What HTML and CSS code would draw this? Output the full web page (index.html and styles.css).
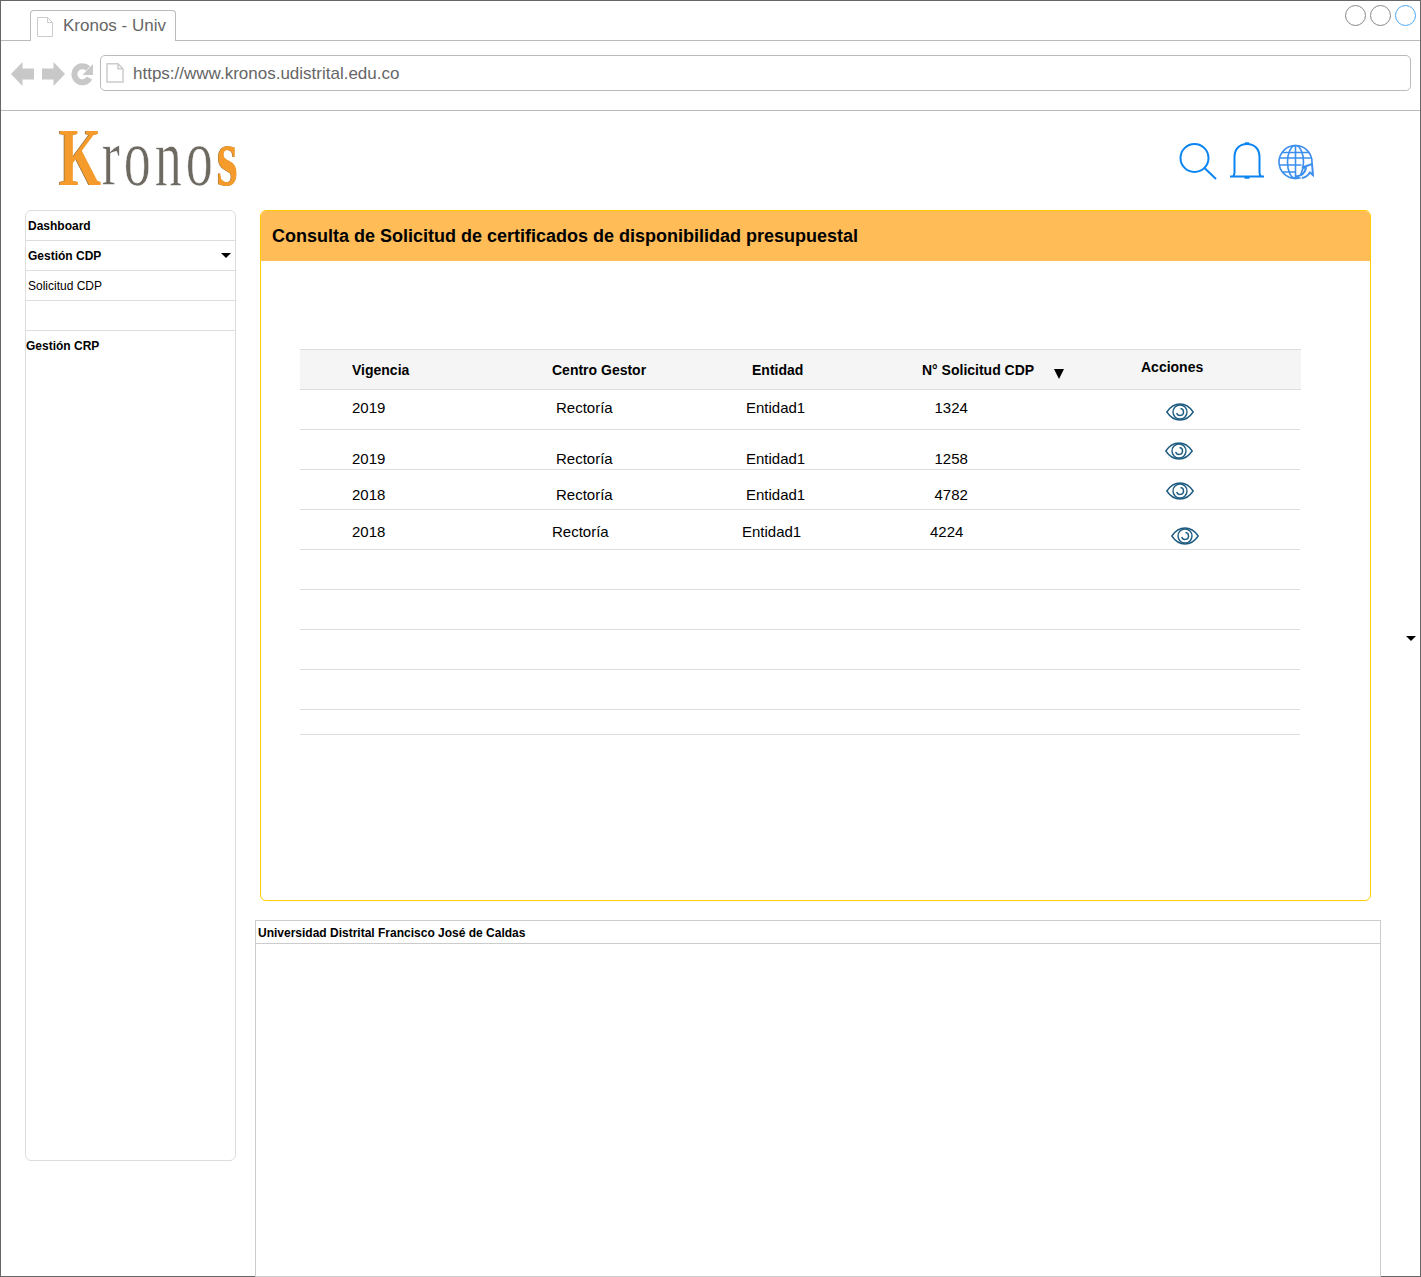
FILE: index.html
```html
<!DOCTYPE html>
<html lang="es">
<head>
  <meta charset="UTF-8" />
  <meta name="viewport" content="width=device-width, initial-scale=1.0"/>
  <title>Kronos - Univ</title>
  <link rel="stylesheet" href="styles.css">
</head>
<body>
<div class="window">

  <!-- browser chrome -->
  <div class="tabbar">
    <div class="tab">
      <svg class="doc" width="18" height="20" viewBox="0 0 18 20"><path d="M1.500.5h10l5 5v14h-15zM11.500.5v5h5" fill="#fff" stroke="#ccc"/></svg>
      <span>Kronos - Univ</span>
    </div>
    <div class="controls">
      <span class="dot"></span>
      <span class="dot"></span>
      <span class="dot dot-blue"></span>
    </div>
  </div>

  <div class="navbar">
    <div class="nav-icons">
      <svg width="24" height="26" viewBox="0 0 24 26"><path d="M0 13 11.500 1v6.500H23v11H11.500V25z" fill="#c8c8c8"/></svg>
      <svg width="24" height="26" viewBox="0 0 24 26"><path d="M24 13 12.500 1v6.500H1v11h11.500V25z" fill="#c8c8c8"/></svg>
      <svg width="23" height="25" viewBox="0 0 23 25"><path d="M17 7.500A8 8 0 1 0 18.500 17" fill="none" stroke="#c8c8c8" stroke-width="6"/><path d="M22 3v11H11.500z" fill="#c8c8c8"/></svg>
    </div>
    <div class="address">
      <svg width="18" height="20" viewBox="0 0 18 20"><path d="M1 .8h11l5 5V19H1zM12 .8v5h5" fill="#fff" stroke="#ccc" stroke-width="1.500"/></svg>
      <span>https://www.kronos.udistrital.edu.co</span>
    </div>
  </div>

  <!-- app header -->
  <header class="apphead">
    <div class="logo"><span class="logo-strong">K</span><span class="logo-thin">rono</span><span class="logo-strong">s</span></div>
    <div class="tools">
      <svg width="38" height="37" viewBox="0 0 38 37" fill="none" stroke="#0a84f0" stroke-width="2"><circle cx="15.500" cy="15" r="14"/><path d="M25.500 25 37 36"/></svg>
      <svg width="36" height="38" viewBox="0 0 36 38" fill="none" stroke="#0a84f0" stroke-width="2"><path d="M1 34.500h34M4 34.500c1-1 1.500-2 1.500-4V15C5.500 7 10.500 2 18 2s12.500 5 12.500 13v15.500c0 2 .5 3 1.500 4"/><path d="M16 1.500h4M15.500 35.500h5" stroke-width="2.500"/></svg>
      <svg width="36" height="36" viewBox="0 0 36 36" fill="none" stroke="#3d8fee" stroke-width="1.600"><circle cx="17.500" cy="18" r="16.500"/><ellipse cx="17.500" cy="18" rx="8" ry="16.500"/><path d="M17.500 1.500v33M4 8.500h27M1.500 14h32M1.500 21h22M4 28h14"/><path d="M17 32c6 1 10-3 11-8l-4-.5 10-3.500 1 11-3-2.500c-2 3-5 5-8 5.500" fill="#fff" stroke-width="2"/></svg>
    </div>
  </header>

  <div class="layout">

    <nav class="sidebar">
      <div class="side-item bold">Dashboard</div>
      <div class="side-item bold">Gestión CDP<span class="caret"></span></div>
      <div class="side-item">Solicitud CDP</div>
      <div class="side-item"></div>
      <div class="side-item bold flush">Gestión CRP</div>
    </nav>

    <main class="main">
      <section class="panel">
        <h1 class="panel-title">Consulta de Solicitud de certificados de disponibilidad presupuestal</h1>
        <div class="grid-table">

          <div class="row row-head">
            <div>Vigencia</div>
            <div>Centro Gestor</div>
            <div>Entidad</div>
            <div class="sort-cell">N° Solicitud CDP<span class="sort-arrow"></span></div>
            <div class="head-actions">Acciones</div>
          </div>

          <div class="row row-a">
            <div>2019</div><div>Rectoría</div><div>Entidad1</div><div>1324</div>
            <div class="eye-cell"><svg class="eye" viewBox="0 0 28 18"><use href="#eye"/></svg></div>
          </div>
          <div class="row row-b">
            <div>2019</div><div>Rectoría</div><div>Entidad1</div><div>1258</div>
            <div class="eye-cell"><svg class="eye" viewBox="0 0 28 18"><use href="#eye"/></svg></div>
          </div>
          <div class="row row-c">
            <div>2018</div><div>Rectoría</div><div>Entidad1</div><div>4782</div>
            <div class="eye-cell"><svg class="eye" viewBox="0 0 28 18"><use href="#eye"/></svg></div>
          </div>
          <div class="row row-d">
            <div>2018</div><div>Rectoría</div><div>Entidad1</div><div>4224</div>
            <div class="eye-cell"><svg class="eye" viewBox="0 0 28 18"><use href="#eye"/></svg></div>
          </div>

          <div class="row"></div>
          <div class="row"></div>
          <div class="row"></div>
          <div class="row"></div>
          <div class="row row-short"></div>
        </div>
      </section>

      <footer class="foot">
        <div class="foot-title">Universidad Distrital Francisco José de Caldas</div>
      </footer>
    </main>
  </div>

  <span class="edge-caret"></span>
</div>

<svg width="0" height="0" class="defs">
  <symbol id="eye" viewBox="0 0 28 18">
    <g fill="none" stroke="#1f5c82" stroke-width="1.400">
      <path d="M.8 9C4.500 3.500 9 1 14 1s9.500 2.500 13.200 8C23.500 14.500 19 17 14 17S4.500 14.500.8 9z"/>
      <circle cx="14" cy="9" r="7"/>
      <path d="M14.500 5.500a3.500 3.500 0 1 1-3.800 4.500"/>
    </g>
  </symbol>
</svg>
</body>
</html>
```
FILE: styles.css
```css
* { box-sizing: border-box; }
html, body { margin: 0; padding: 0; background: #fff; }
body { font-family: "Liberation Sans", Arial, sans-serif; color: #000; height: 1277px; overflow: hidden; }
.defs { display: block; height: 0; }

.window { position: relative; width: 1421px; height: 1277px; border: 1px solid #666; }

/* browser chrome */
.tabbar { display: flex; justify-content: space-between; height: 40px; border-bottom: 1px solid #bbb; padding: 9px 4px 0 29px; }
.tab { display: flex; align-items: flex-start; height: 31px; width: 146px; padding: 5px 0 0 5px; gap: 9px; background: #fff; border: 1px solid #bbb; border-bottom: none; border-radius: 4px 4px 0 0; font-size: 17px; color: #666; }
.tab .doc { margin-top: 1px; }
.tab span { line-height: 20px; }
.controls { display: flex; gap: 4px; margin-top: -5px; }
.dot { width: 21px; height: 21px; border: 1px solid #888; border-radius: 50%; }
.dot-blue { border-color: #4aa8f5; }

.navbar { display: flex; height: 70px; padding: 14px 9px 0 10px; border-bottom: 1px solid #bbb; }
.nav-icons { display: flex; gap: 6px; width: 89px; padding-top: 6px; align-items: flex-start; }
.nav-icons svg:last-child { margin-left: 0; }
.address { display: flex; align-items: center; gap: 9px; flex: 1; height: 36px; padding: 2px 0 0 5px; border: 1px solid #bbb; border-radius: 5px; font-size: 17px; color: #666; }
.address svg { margin-top: -2px; }

/* app header */
.apphead { display: flex; justify-content: space-between; height: 99px; padding: 0 106px 0 58px; }
.logo { width: 180px; height: 99px; font-family: "Liberation Serif", serif; font-size: 82px; line-height: 99px; white-space: nowrap; transform: scaleX(0.66); transform-origin: left center; margin-top: -3px; }
.logo-strong { font-weight: bold; color: #f59b2b; text-shadow: -1px 0 0 #8a6a3a; letter-spacing: -10px; }
.logo-thin { color: #6e6a62; -webkit-text-stroke: 0.7px #fff; letter-spacing: 6px; margin-left: 11px; }
.tools { display: flex; align-items: flex-start; padding-top: 32px; gap: 12px; }
.tools svg:nth-child(2) { margin-top: -1px; }
.tools svg:last-child { margin-left: 1px; margin-top: 1px; }

.layout { display: grid; grid-template-columns: 211px 1126px; column-gap: 19px; padding-left: 24px; }

/* sidebar */
.sidebar { height: 951px; border: 1px solid #ddd; border-radius: 6px; font-size: 12px; }
.side-item { display: flex; align-items: center; justify-content: space-between; height: 30px; padding: 0 4px 0 2px; border-bottom: 1px solid #ddd; }
.side-item:last-child { border-bottom: none; padding-left: 0; }
.bold { font-weight: bold; }
.caret { width: 0; height: 0; margin-right: 0; border-left: 5px solid transparent; border-right: 5px solid transparent; border-top: 5px solid #000; }

/* main panel */
.panel { width: 1111px; height: 691px; margin-left: 5px; border: 1px solid #ffcc00; border-radius: 6px; overflow: hidden; }
.panel-title { margin: -1px -1px 0; height: 51px; padding: 1px 0 0 12px; background: #ffbc57; font-size: 18px; line-height: 51px; font-weight: bold; }
.grid-table { margin: 88px 0 0 39px; width: 1000px; font-size: 15px; }

.row { display: grid; grid-template-columns: 204px 190px 188.500px 231.500px 1fr; height: 40px; padding-left: 52px; border-bottom: 1px solid #ddd; line-height: 18px; }
.row-head { grid-template-columns: 200px 200px 170px 219px 1fr; height: 41px; width: 1001px; border-top: 1px solid #ddd; background: #f5f5f5; font-size: 14px; font-weight: bold; padding-top: 11px; }
.row-short { height: 25px; }

.sort-cell { position: relative; }
.sort-arrow { position: absolute; left: 132px; top: 8px; width: 0; height: 0; border-left: 5px solid transparent; border-right: 5px solid transparent; border-top: 10px solid #000; }
.head-actions { margin-top: -3px; }

.row-a { padding-top: 9px; }
.row-b { padding-top: 20px; }
.row-c { padding-top: 16px; }
.row-d { padding-top: 13px; grid-template-columns: 200px 190px 188px 241px 1fr; }

.eye-cell { line-height: 0; }
.eye { width: 28px; height: 18px; }
.row-a .eye-cell { margin-top: 4px; }
.row-b .eye-cell { margin-top: -8px; margin-left: -1px; }
.row-c .eye-cell { margin-top: -4px; }
.row-d .eye-cell { margin-top: 4px; }

/* footer */
.foot { width: 1126px; height: 357px; margin-top: 19px; border: 1px solid #ccc; position: relative; }
.foot-title { height: 23px; padding: 5px 0 0 2px; border-bottom: 1px solid #ccc; font-size: 12px; line-height: 14px; font-weight: bold; }

.edge-caret { position: absolute; right: 4px; top: 635px; width: 0; height: 0; border-left: 5px solid transparent; border-right: 5px solid transparent; border-top: 5px solid #000; }
```
